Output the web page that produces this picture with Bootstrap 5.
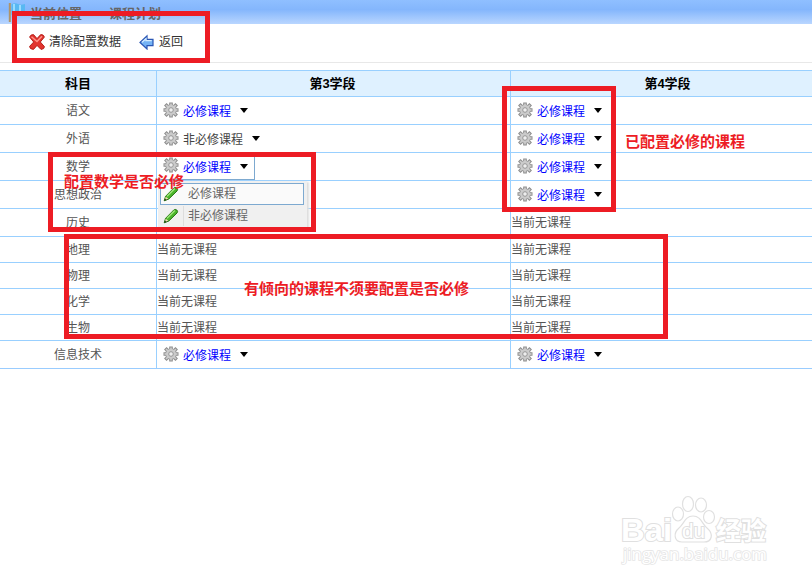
<!DOCTYPE html>
<html lang="zh-CN">
<head>
<meta charset="utf-8">
<title>课程计划</title>
<link href="https://cdn.jsdelivr.net/npm/bootstrap@5.3.0/dist/css/bootstrap.min.css" rel="stylesheet">
<style>
body{font:12px/16px "Liberation Sans","Noto Sans CJK SC",sans-serif;color:#555;width:812px;height:584px}
svg{display:block;flex:none}
.location{height:24px;background:linear-gradient(#8fbfff,#84b6fc 40%,#b9d6ff);color:#666;font-weight:700;font-size:13px;padding-left:8px}
.location span{line-height:16px;margin-top:6px}
.tools{height:39px;border-bottom:1px solid #e8e8e8;padding:0 0 2px 29px;color:#333}
.back-icon{margin-left:18px}
.plan{width:826px;margin-top:7px;table-layout:fixed;border-collapse:separate;border-spacing:0;border-bottom:1px solid #99ccff}
.plan th,.plan td{height:28px;padding:0;border-top:1px solid #99d0ff;vertical-align:middle;line-height:16px}
.plan th+th,.plan td+td{border-left:1px solid #99d0ff}
.plan td:first-child,.plan th{text-align:center}
.plan th{height:26px;background:#dff1ff;color:#000;font-size:13px}
.plan th+th{padding-right:2px}
.plan .short td{height:26px}
.picker{width:97px;height:26px;padding:0 0 0 6px;color:#444;line-height:16px}
.picker.must{color:#00f}
.picker svg{margin-bottom:2px}
.picker span{margin:3px 9px 0 4px}
.picker.open{border:solid #7da9d0;border-width:0 1px 1px 0;width:98px}
.picker.open span{margin-top:4px}
.arrow-down{width:0;height:0;border:4px solid transparent;border-top:5px solid #000;border-bottom:0}
.options{left:1px;top:28px;width:149px;height:48px;background:#f0f0f0;box-shadow:2px 1px 2px #ddd;z-index:2;padding:2px 3px 0 2px;color:#666}
.options div{height:22px;padding-left:2px;border:1px solid transparent}
.options div:first-child{background:#fafafa;border-color:#7da9d0}
.options span{margin-left:9px}
.options div:last-child span{margin-left:4px;border-left:1px solid #ddd;padding:2px 0 2px 4px}
.frame{position:absolute;border:5px solid #ed1c24;z-index:5}
.f1{left:12px;top:11px;width:198px;height:52px}
.f2{left:48px;top:152px;width:268px;height:80px}
.f3{left:502px;top:86px;width:114px;height:126px}
.f4{left:64px;top:234px;width:604px;height:105px}
.note{position:absolute;font-size:15px;line-height:20px;font-weight:700;color:#ed1c24;white-space:nowrap;z-index:6}
.n1{left:64px;top:172px}.n2{left:625px;top:132px}.n3{left:244px;top:279px}
.watermark{left:616px;top:490px}
</style>
<script src="https://cdn.jsdelivr.net/npm/bootstrap@5.3.0/dist/js/bootstrap.bundle.min.js"></script>
</head>
<body class="position-relative overflow-hidden bg-white">
<svg width="0" height="0" class="position-absolute">
<symbol id="gear" viewBox="0 0 16 16">
<g stroke="#8d8d8d" stroke-width="3.6"><path d="M8 .5v15M.5 8h15M2.3 2.3l11.4 11.4M13.7 2.3 2.3 13.7"/></g>
<circle cx="8" cy="8" r="5.8" fill="#979797"/>
<g stroke="#cfcfcf" stroke-width="1.6"><path d="M8 1.4v13.2M1.4 8h13.2M3 3l10 10M13 3 3 13"/></g>
<circle cx="8" cy="8" r="5" fill="#cbcbcb"/><circle cx="8" cy="8" r="2.3" fill="#eee" stroke="#979797"/>
</symbol>
<symbol id="pencil" viewBox="0 0 16 16">
<path d="m1.2 14.8 1.4-4.5 8-8.1q1.6-1.4 3.2-.2 1.5 1.4.2 3L5.8 13Z" fill="#4bb52c" stroke="#23740f"/>
<path d="m4 10.2 7.8-7.7" stroke="#a4e87e" stroke-width="1.3"/><path d="m1 15 1.5-3.6 2.4 2Z" fill="#2b4c1b"/><path d="m2.7 10.8 2.6 2-2.1.8-1-1Z" fill="#f3dfb5"/>
</symbol>
</svg>

<header class="location d-flex align-items-start">
<svg width="18" height="24" viewBox="0 0 18 24"><path d="M1.8 3v19" stroke="#b09468" stroke-width="2"/><path d="M3.5 4q4-1.500 6.500 0t7 0v11q-4 2-6.500 0t-7 0Z" fill="#58b8f2"/><path d="M6 4v10M12 5v10" stroke="#9adcff" stroke-width="2"/></svg>
<span class="ms-1">当前位置</span><span style="margin-left:27px">课程计划</span>
</header>
<div class="tools d-flex align-items-center">
<svg width="16" height="16" viewBox="0 0 16 16"><path d="M.6 3Q1.500.5 4.500.6L8 4.600 11.700.6Q14.500.3 15.400 3L11.300 8l4.100 4.600q.1 2.600-3.400 2.800L8 11.400l-3.500 4Q.6 15.200.6 12.400L4.700 8Z" fill="#e2342e" stroke="#b5201b"/><path d="M2.500 2.800 8 7.500l5-5.200" fill="none" stroke="#ff9288" stroke-width="1.5"/></svg>
<span style="margin-left:4px">清除配置数据</span>
<svg class="back-icon" width="16" height="16" viewBox="0 0 16 16"><path d="M1 8.500 8 2v3.300h6v6.400H8V15Z" fill="#75b3f5" stroke="#2a56b4" stroke-width="1.2"/><path d="m3 8.300 4-3.500v1.800h5.700" fill="none" stroke="#d4ecff" stroke-width="1.3"/></svg>
<span style="margin-left:4px">返回</span>
</div>
<table class="plan">
<colgroup><col style="width:156px"><col style="width:354px"><col></colgroup>
<thead><tr><th>科目</th><th>第3学段</th><th>第4学段</th></tr></thead>
<tbody>
<tr><td>语文</td><td><div class="picker must d-flex align-items-center"><svg width="16" height="16"><use href="#gear"/></svg><span>必修课程</span><i class="arrow-down"></i></div></td><td><div class="picker must d-flex align-items-center"><svg width="16" height="16"><use href="#gear"/></svg><span>必修课程</span><i class="arrow-down"></i></div></td></tr>
<tr><td>外语</td><td><div class="picker w-auto d-flex align-items-center"><svg width="16" height="16"><use href="#gear"/></svg><span>非必修课程</span><i class="arrow-down"></i></div></td><td><div class="picker must d-flex align-items-center"><svg width="16" height="16"><use href="#gear"/></svg><span>必修课程</span><i class="arrow-down"></i></div></td></tr>
<tr><td>数学</td><td class="position-relative"><div class="picker must open d-flex align-items-center"><svg width="16" height="16"><use href="#gear"/></svg><span>必修课程</span><i class="arrow-down"></i></div>
<div class="options position-absolute"><div class="d-flex align-items-center"><svg width="16" height="16"><use href="#pencil"/></svg><span>必修课程</span></div><div class="d-flex align-items-center"><svg width="16" height="16"><use href="#pencil"/></svg><span>非必修课程</span></div></div></td><td><div class="picker must d-flex align-items-center"><svg width="16" height="16"><use href="#gear"/></svg><span>必修课程</span><i class="arrow-down"></i></div></td></tr>
<tr><td>思想政治</td><td></td><td><div class="picker must d-flex align-items-center"><svg width="16" height="16"><use href="#gear"/></svg><span>必修课程</span><i class="arrow-down"></i></div></td></tr>
<tr><td>历史</td><td></td><td>当前无课程</td></tr>
<tr class="short"><td>地理</td><td>当前无课程</td><td>当前无课程</td></tr>
<tr class="short"><td>物理</td><td>当前无课程</td><td>当前无课程</td></tr>
<tr class="short"><td>化学</td><td>当前无课程</td><td>当前无课程</td></tr>
<tr class="short"><td>生物</td><td>当前无课程</td><td>当前无课程</td></tr>
<tr><td>信息技术</td><td><div class="picker must d-flex align-items-center"><svg width="16" height="16"><use href="#gear"/></svg><span>必修课程</span><i class="arrow-down"></i></div></td><td><div class="picker must d-flex align-items-center"><svg width="16" height="16"><use href="#gear"/></svg><span>必修课程</span><i class="arrow-down"></i></div></td></tr>
</tbody>
</table>

<div class="frame f1"></div><div class="frame f2"></div><div class="frame f3"></div><div class="frame f4"></div>
<div class="note n1">配置数学是否必修</div><div class="note n2">已配置必修的课程</div><div class="note n3">有倾向的课程不须要配置是否必修</div>

<svg class="watermark position-absolute" width="160" height="80" viewBox="0 0 160 80" fill="#fff" stroke="#e0e0e0" stroke-width="1.2">
<g><ellipse cx="62" cy="24" rx="5.5" ry="7"/><ellipse cx="72" cy="14" rx="5.5" ry="7.5"/><ellipse cx="85" cy="15" rx="5.5" ry="7"/><ellipse cx="93" cy="27" rx="5.5" ry="6.5"/><path d="M77 26c-8 0-9 8-14 12-6 5-5 14 3 14h22c8 0 10-8 3-14-5-4-6-12-14-12Z"/></g>
<g font-family="Liberation Sans,sans-serif" font-weight="700" paint-order="stroke" stroke-width="2"><text x="5" y="51" font-size="32" textLength="51" lengthAdjust="spacingAndGlyphs">Bai</text><text x="66" y="48" font-size="20" font-weight="400" textLength="23" lengthAdjust="spacingAndGlyphs">du</text><text x="100" y="50" font-size="25" textLength="50" font-family="Noto Sans CJK SC,sans-serif">经验</text><text x="7" y="70" font-size="15.5" textLength="144" lengthAdjust="spacingAndGlyphs" font-weight="400" stroke="#e6e6e6" stroke-width="1.6" font-family="Open Sans,sans-serif">jingyan.baidu.com</text></g>
</svg>
</body>
</html>
